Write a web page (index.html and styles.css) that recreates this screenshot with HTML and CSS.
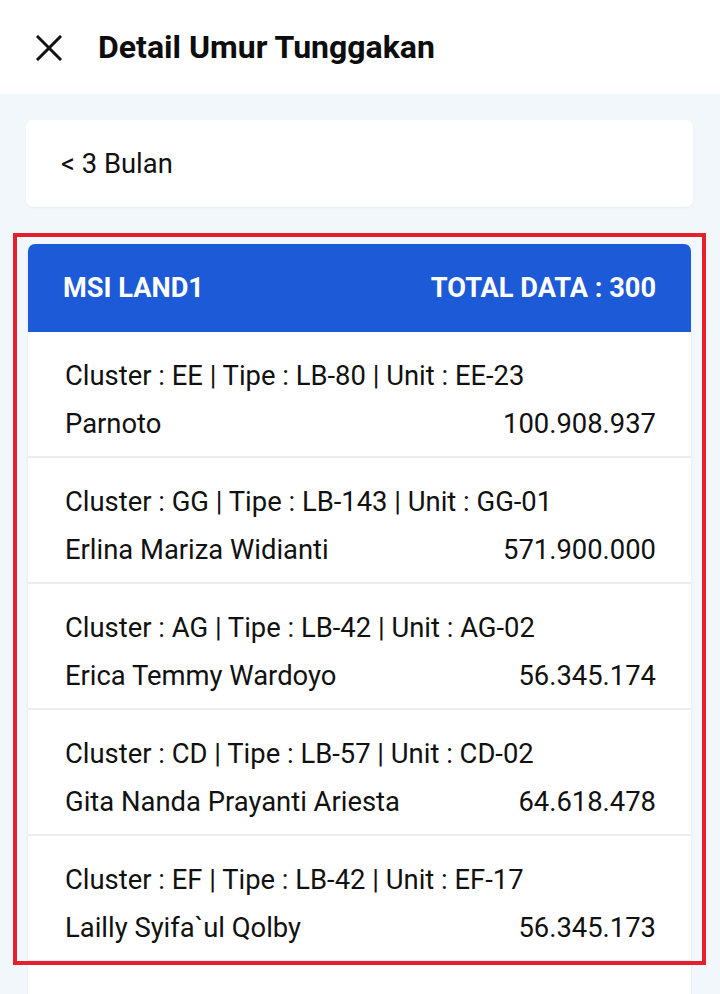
FILE: index.html
```html
<!DOCTYPE html>
<html lang="id">
<head>
<meta charset="utf-8">
<title>Detail Umur Tunggakan</title>
<link rel="stylesheet" href="styles.css">
</head>
<body>
<header class="appbar">
  <svg class="close-icon" width="26" height="26" viewBox="0 0 26 26" aria-hidden="true">
    <path d="M2 2 L24 24 M24 2 L2 24" stroke="#111" stroke-width="3" stroke-linecap="square" fill="none"/>
  </svg>
  <h1 class="title">Detail Umur Tunggakan</h1>
</header>
<main class="content">
  <div class="filter-card">&lt; 3 Bulan</div>
  <section class="group">
    <div class="group-head">
      <span>MSI LAND1</span>
      <span>TOTAL DATA : 300</span>
    </div>
    <div class="row">
      <div class="line">Cluster : EE | Tipe : LB-80 | Unit : EE-23</div>
      <div class="line split"><span>Parnoto</span><span>100.908.937</span></div>
    </div>
    <div class="row">
      <div class="line">Cluster : GG | Tipe : LB-143 | Unit : GG-01</div>
      <div class="line split"><span>Erlina Mariza Widianti</span><span>571.900.000</span></div>
    </div>
    <div class="row">
      <div class="line">Cluster : AG | Tipe : LB-42 | Unit : AG-02</div>
      <div class="line split"><span>Erica Temmy Wardoyo</span><span>56.345.174</span></div>
    </div>
    <div class="row">
      <div class="line">Cluster : CD | Tipe : LB-57 | Unit : CD-02</div>
      <div class="line split"><span>Gita Nanda Prayanti Ariesta</span><span>64.618.478</span></div>
    </div>
    <div class="row">
      <div class="line">Cluster : EF | Tipe : LB-42 | Unit : EF-17</div>
      <div class="line split"><span>Lailly Syifa`ul Qolby</span><span>56.345.173</span></div>
    </div>
    <div class="row">
      <div class="line">Cluster : EG | Tipe : LB-42 | Unit : EG-05</div>
      <div class="line split"><span>Rahmat Hidayat</span><span>56.345.173</span></div>
    </div>
  </section>
</main>
<div class="highlight"></div>
</body>
</html>
```
FILE: styles.css
```css
html, body {
  margin: 0;
  padding: 0;
}
body {
  background: #f2f7fc;
  font-family: Roboto, "Noto Sans", sans-serif;
  color: #111111;
  height: 994px;
  overflow: hidden;
  position: relative;
}
.appbar {
  height: 94px;
  background: #ffffff;
  display: flex;
  align-items: center;
  padding-left: 36px;
  gap: 36px;
  box-sizing: border-box;
}
.close-icon {
  display: block;
  margin-top: 1px;
}
.title {
  margin: 0;
  font-size: 32px;
  font-weight: 700;
  color: #0d0d0d;
}
.content {
  padding: 26px 27px 0 26px;
}
.filter-card {
  height: 87px;
  background: #ffffff;
  border-radius: 7px;
  display: flex;
  align-items: center;
  padding-left: 35px;
  font-size: 27.4px;
  box-shadow: 0 1px 2px rgba(0, 0, 0, 0.04);
}
.group {
  margin: 37px 2px 0 2px;
  background: #ffffff;
  border-radius: 7px 7px 0 0;
  box-shadow: 0 1px 3px rgba(0, 0, 0, 0.06);
}
.group-head {
  height: 88px;
  background: #1c5ad8;
  border-radius: 7px 7px 0 0;
  color: #ffffff;
  font-weight: 700;
  font-size: 27.2px;
  display: flex;
  align-items: center;
  justify-content: space-between;
  padding: 0 35px 0 35px;
}
.row {
  padding: 20px 35px 8px 37px;
  border-bottom: 2px solid #ebedf0;
}
.line {
  font-size: 27.4px;
  line-height: 48px;
  height: 48px;
  white-space: nowrap;
}
.split {
  display: flex;
  justify-content: space-between;
}
.highlight {
  position: absolute;
  left: 13px;
  top: 233px;
  width: 693px;
  height: 732px;
  box-sizing: border-box;
  border: 4px solid #e3202b;
  pointer-events: none;
}
```
